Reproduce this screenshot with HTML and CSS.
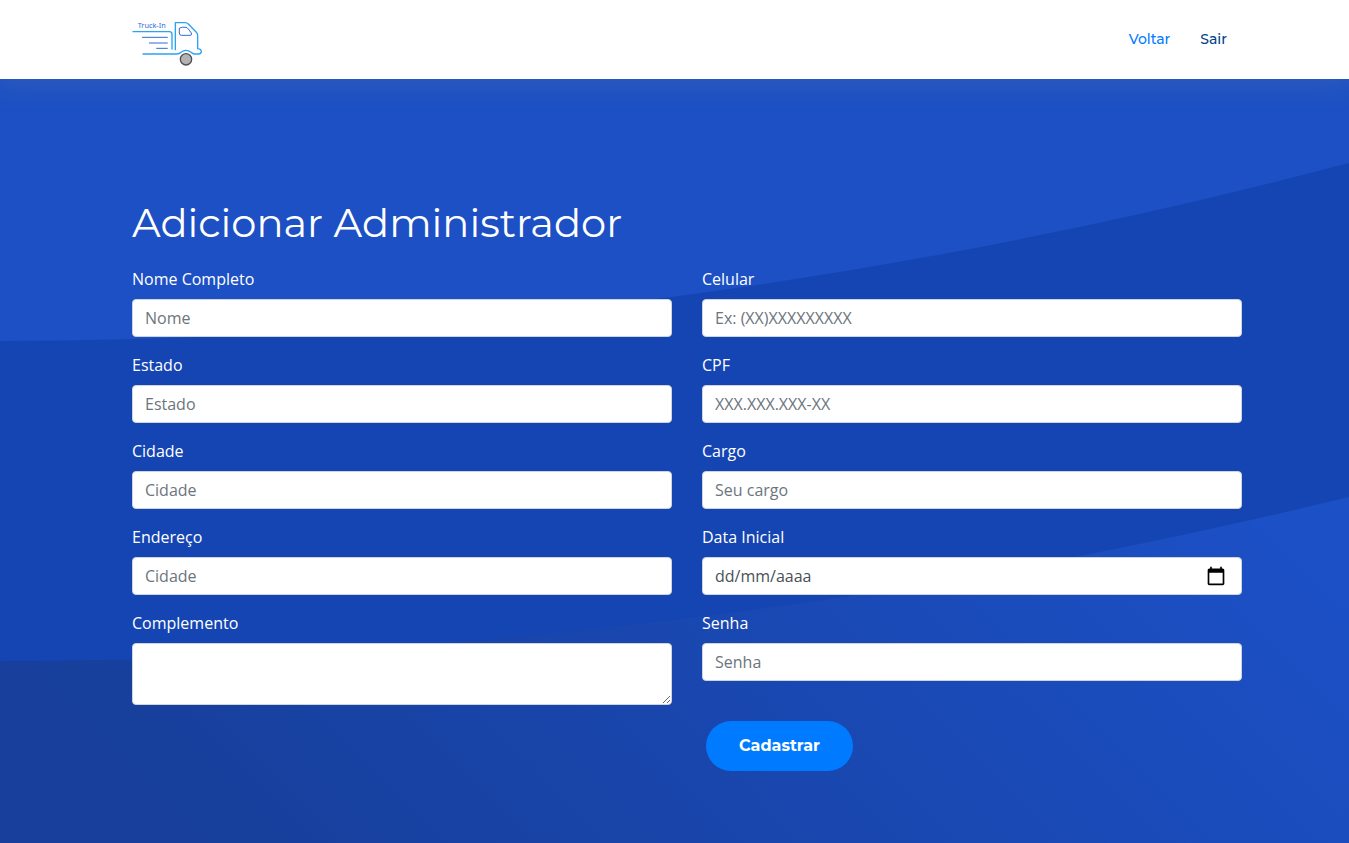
FILE: index.html
```html
<!DOCTYPE html>
<html lang="pt-BR">
<head>
<meta charset="utf-8">
<meta name="viewport" content="width=device-width, initial-scale=1">
<title>Truck-In</title>
<link rel="stylesheet" href="styles.css">
</head>
<body>
<header class="header">
  <div class="container header-row">
    <a href="#" class="logo" aria-label="Truck-In">
      <svg class="logo-art" viewBox="36 30 213 141" fill="none" stroke-width="4" stroke-linecap="round" stroke-linejoin="round">
        <text class="logo-text" x="53" y="55">Truck-In</text>
        <g stroke="#2ba3f5">
          <path d="M39 65H148Q156 65 156 73V117"/>
          <path d="M166 119V38H196Q201 38 205 42L229 67Q233 71 233 77V116Q244 117 244 125Q243 132 236 132H224Q218 132 213 127Q198 115 183 127Q178 132 170 132H69"/>
        </g>
        <g stroke="#2c6bdc" stroke-width="3">
          <path d="M179 54Q186 50 198 52Q202 53 205 57L214 69Q217 76 210 76H184Q178 76 178 70Z"/>
          <path d="M67 82H142M88 99H142M110 115H142"/>
        </g>
        <circle cx="198" cy="148" r="17" fill="#b3b3b3" stroke="#505050" stroke-width="4"/>
      </svg>
    </a>
    <nav class="nav">
      <a class="nav-link active" href="#">Voltar</a>
      <a class="nav-link" href="#">Sair</a>
    </nav>
  </div>
</header>
<main class="hero">
  <svg class="waves" viewBox="0 0 1349 764" preserveAspectRatio="none" aria-hidden="true">
    <defs>
      <linearGradient id="low" gradientUnits="userSpaceOnUse" x1="200" y1="764" x2="900" y2="64">
        <stop offset="0" stop-color="#173f9b"/>
        <stop offset="1" stop-color="#1c50c6"/>
      </linearGradient>
    </defs>
    <path fill="#1545b3" d="M0 262Q675 262 1349 84V764H0Z"/>
    <path fill="url(#low)" d="M0 582Q675 582 1349 418V764H0Z"/>
  </svg>
  <div class="container content">
    <h1 class="title">Adicionar Administrador</h1>
    <form class="form">
      <div class="column">
        <div class="field"><label for="nome">Nome Completo</label><input class="control" id="nome" type="text" placeholder="Nome"></div>
        <div class="field"><label for="estado">Estado</label><input class="control" id="estado" type="text" placeholder="Estado"></div>
        <div class="field"><label for="cidade">Cidade</label><input class="control" id="cidade" type="text" placeholder="Cidade"></div>
        <div class="field"><label for="endereco">Endereço</label><input class="control" id="endereco" type="text" placeholder="Cidade"></div>
        <div class="field"><label for="complemento">Complemento</label><textarea class="control" id="complemento" rows="2"></textarea></div>
      </div>
      <div class="column">
        <div class="field"><label for="celular">Celular</label><input class="control" id="celular" type="tel" placeholder="Ex: (XX)XXXXXXXXX"></div>
        <div class="field"><label for="cpf">CPF</label><input class="control" id="cpf" type="text" placeholder="XXX.XXX.XXX-XX"></div>
        <div class="field"><label for="cargo">Cargo</label><input class="control" id="cargo" type="text" placeholder="Seu cargo"></div>
        <div class="field">
          <label for="data">Data Inicial</label>
          <div class="date">
            <input class="control date-input" id="data" type="text" inputmode="numeric" placeholder="dd/mm/aaaa">
            <button class="date-button" type="button" aria-label="Abrir calendário">
              <svg width="20" height="20" viewBox="0 0 24 24"><path d="M20 3h-1V1h-2v2H7V1H5v2H4c-1.100 0-2 .9-2 2v16c0 1.100.9 2 2 2h16c1.100 0 2-.9 2-2V5c0-1.100-.9-2-2-2zm0 18H4V8h16v13z"/></svg>
            </button>
          </div>
        </div>
        <div class="field"><label for="senha">Senha</label><input class="control" id="senha" type="password" placeholder="Senha"></div>
        <button class="submit" type="submit">Cadastrar</button>
      </div>
    </form>
  </div>
</main>
</body>
</html>
```
FILE: styles.css
```css
*, *::before, *::after { box-sizing: border-box; }

body {
  margin: 0;
  min-height: 100vh;
  display: flex;
  flex-direction: column;
  font: 16px/24px "Open Sans", sans-serif;
  color: #fff;
  background: #1c50c4;
}

.header {
  position: relative;
  z-index: 1;
  padding: 16px 0 12px 25px;
  background: #fff;
  box-shadow: 0 0 30px 4px rgba(127, 137, 161, 0.22);
}

.container {
  width: 100%;
  max-width: 1142px;
  margin: 0 auto;
  padding: 0 16px;
}

.header-row {
  display: flex;
  align-items: center;
  justify-content: space-between;
}

.logo { display: block; padding: 4px 0 0; }
.logo-art { display: block; width: 71px; height: 47px; }
.logo-text { font: 22px "Noto Sans", sans-serif; fill: #2c6bdc; }

.nav { display: flex; gap: 30px; padding: 0 15px 6px 0; }

.nav-link {
  font: 500 14px/20px Montserrat, Inter, sans-serif;
  color: #004289;
  text-decoration: none;
}
.nav-link.active { color: #007bff; }

.hero {
  position: relative;
  flex: 1;
  padding: 120px 0 72px 25px;
}

.waves {
  position: absolute;
  inset: 0;
  width: 100%;
  height: 100%;
}

.content { position: relative; }

.title {
  margin: 0 0 20px;
  font: 400 40px/48px Montserrat, Inter, sans-serif;
}

.form {
  display: grid;
  grid-template-columns: repeat(2, minmax(0, 1fr));
  gap: 30px;
  align-items: start;
}

.field {
  display: flex;
  flex-direction: column;
  gap: 8px;
  margin-bottom: 16px;
}

.control {
  display: block;
  width: 100%;
  padding: 6px 12px;
  font: inherit;
  color: #495057;
  background: #fff;
  border: 1px solid #ced4da;
  border-radius: 4px;
}
.control::placeholder { color: #6c757d; opacity: 1; }

textarea.control { resize: vertical; }

.date { position: relative; }
.date-input::placeholder { color: #495057; }

.date-button {
  position: absolute;
  top: 9px;
  right: 16px;
  display: flex;
  padding: 0;
  background: none;
  border: 0;
  cursor: pointer;
}

.submit {
  display: block;
  margin: 40px 0 0 4px;
  padding: 13px 33px;
  font: 700 16px/24px Montserrat, Inter, sans-serif;
  color: #fff;
  background: #007bff;
  border: 0;
  border-radius: 50px;
  cursor: pointer;
}
```
